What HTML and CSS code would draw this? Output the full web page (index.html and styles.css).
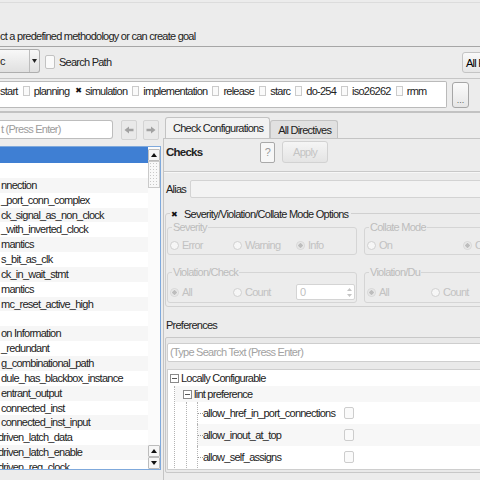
FILE: index.html
```html
<!DOCTYPE html>
<html lang="en">
<head>
<meta charset="UTF-8">
<title>Goal Setup</title>
<link rel="stylesheet" href="styles.css">
</head>
<body>
<div class="intro">ct a predefined methodology or can create goal</div>

<div class="toolbar">
    <div class="combo">
        <span class="combo-text">c</span>
        <span class="combo-arrow"><svg width="5" height="4" viewBox="0 0 5 4"><path d="M0 0H5L2.5 4Z" fill="#222"/></svg></span>
    </div>
    <span class="search-check"></span>
    <span class="label">Search Path</span>
    <button class="all-btn">All Rules</button>
</div>

<div class="methods-row">
    <div class="methods">
        <span>start</span>
        <span class="cb"></span><span>planning</span>
        <span class="cb on">&#10006;</span><span>simulation</span>
        <span class="cb"></span><span>implementation</span>
        <span class="cb"></span><span>release</span>
        <span class="cb"></span><span>starc</span>
        <span class="cb"></span><span>do-254</span>
        <span class="cb"></span><span>iso26262</span>
        <span class="cb"></span><span>rmm</span>
    </div>
    <button class="more">...</button>
</div>

<div class="main">
    <!-- rule list -->
    <div class="left">
        <div class="search-row">
            <div class="search">t (Press Enter)</div>
            <button class="nav"><svg width="10" height="8" viewBox="0 0 10 8"><path d="M0.5 4L5 0.5V2.8H9.5V5.2H5V7.5Z" fill="#a2a2a2"/></svg></button>
            <button class="nav next"><svg width="10" height="8" viewBox="0 0 10 8"><path d="M9.5 4L5 0.5V2.8H0.5V5.2H5V7.5Z" fill="#a2a2a2"/></svg></button>
        </div>
        <div class="list">
            <ul class="rows">
                <li class="sel"></li>
                <li></li>
                <li>nnection</li>
                <li>_port_conn_complex</li>
                <li>ck_signal_as_non_clock</li>
                <li>_with_inverted_clock</li>
                <li>mantics</li>
                <li>s_bit_as_clk</li>
                <li>ck_in_wait_stmt</li>
                <li>mantics</li>
                <li>mc_reset_active_high</li>
                <li></li>
                <li>on Information</li>
                <li>_redundant</li>
                <li>g_combinational_path</li>
                <li>dule_has_blackbox_instance</li>
                <li>entrant_output</li>
                <li>connected_inst</li>
                <li>connected_inst_input</li>
                <li class="cut">driven_latch_data</li>
                <li class="cut">driven_latch_enable</li>
                <li class="cut">driven_reg_clock</li>
            </ul>
            <div class="scrollbar">
                <div class="sb-btn"><svg width="6" height="4" viewBox="0 0 6 4"><path d="M0 4L3 0L6 4Z" fill="#111"/></svg></div>
                <div class="sb-thumb"></div>
                <div class="sb-track"></div>
                <div class="sb-btn"><svg width="6" height="4" viewBox="0 0 6 4"><path d="M0 4L3 0L6 4Z" fill="#111"/></svg></div>
                <div class="sb-btn"><svg width="6" height="4" viewBox="0 0 6 4"><path d="M0 0L3 4L6 0Z" fill="#111"/></svg></div>
            </div>
        </div>
    </div>

    <!-- configuration -->
    <div class="right">
        <div class="tabs">
            <div class="tab active">Check Configurations</div>
            <div class="tab">All Directives</div>
        </div>
        <div class="pane">
            <div class="checks-row">
                <span class="checks-title">Checks</span>
                <button class="help">?</button>
                <button class="apply">Apply</button>
            </div>
            <div class="sep"></div>
            <div class="alias-row">
                <span class="alias-label">Alias</span>
                <div class="alias-input"></div>
            </div>

            <div class="options">
                <div class="legend"><span class="x-mark">&#10006;</span>Severity/Violation/Collate Mode Options</div>
                <div class="groups">
                    <div class="group">
                        <div class="group-title">Severity</div>
                        <div class="radios">
                            <span class="opt"><span class="radio"></span>Error</span>
                            <span class="opt"><span class="radio"></span>Warning</span>
                            <span class="opt"><span class="radio on"></span>Info</span>
                        </div>
                    </div>
                    <div class="group">
                        <div class="group-title">Collate Mode</div>
                        <div class="radios">
                            <span class="opt wide"><span class="radio"></span>On</span>
                            <span class="opt"><span class="radio on"></span>Off</span>
                        </div>
                    </div>
                    <div class="group">
                        <div class="group-title">Violation/Check</div>
                        <div class="radios second">
                            <span class="opt"><span class="radio on"></span>All</span>
                            <span class="opt"><span class="radio"></span>Count</span>
                            <div class="spin">0
                                <span class="spin-arrows">
                                    <svg width="5" height="3" viewBox="0 0 5 3"><path d="M0 3L2.5 0L5 3Z" fill="#c4c4c4"/></svg>
                                    <svg width="5" height="3" viewBox="0 0 5 3"><path d="M0 0L2.5 3L5 0Z" fill="#c4c4c4"/></svg>
                                </span>
                            </div>
                        </div>
                    </div>
                    <div class="group">
                        <div class="group-title">Violation/Du</div>
                        <div class="radios second">
                            <span class="opt du"><span class="radio on"></span>All</span>
                            <span class="opt"><span class="radio"></span>Count</span>
                        </div>
                    </div>
                </div>
            </div>

            <div class="pref-title">Preferences</div>
            <div class="frame">
                <div class="frame-search">(Type Search Text (Press Enter)</div>
                <div class="tree">
                    <div class="node"><svg class="toggle" width="9" height="9" viewBox="0 0 9 9"><rect x="0.5" y="0.5" width="8" height="8" fill="#fff" stroke="#8a8a8a"/><path d="M2 4.5H7" stroke="#555"/></svg>Locally Configurable</div>
                    <div class="children">
                        <div class="node sub"><svg class="toggle" width="9" height="9" viewBox="0 0 9 9"><rect x="0.5" y="0.5" width="8" height="8" fill="#fff" stroke="#8a8a8a"/><path d="M2 4.5H7" stroke="#555"/></svg>lint preference</div>
                        <div class="children inner">
                            <div class="leaf"><span class="dash"></span><span class="leaf-name">allow_href_in_port_connections</span><span class="leaf-cb"></span></div>
                            <div class="leaf alt"><span class="dash"></span><span class="leaf-name">allow_inout_at_top</span><span class="leaf-cb"></span></div>
                            <div class="leaf"><span class="dash"></span><span class="leaf-name">allow_self_assigns</span><span class="leaf-cb"></span></div>
                        </div>
                    </div>
                </div>
            </div>
        </div>
    </div>
</div>
</body>
</html>
```

FILE: styles.css
```css
* {
    box-sizing: border-box;
}
body {
    margin: 0;
    width: 480px;
    height: 480px;
    overflow: hidden;
    background: #ececec;
    color: #222;
    font-family: "Liberation Sans Narrow", "Liberation Sans", Arial, sans-serif;
    font-size: 11px;
    letter-spacing: -0.75px;
}
button {
    font: inherit;
    letter-spacing: inherit;
    padding: 0;
    cursor: pointer;
}

/* top bars */
.intro {
    margin-top: 2px;
    height: 45px;
    padding-top: 26px;
    line-height: 14px;
    border-top: 1px solid #dcdcdc;
    border-bottom: 1px solid #a6a6a6;
    white-space: nowrap;
}
.toolbar {
    display: flex;
    align-items: flex-start;
    height: 32px;
    padding-top: 2px;
    border-bottom: 1px solid #c6c6c6;
}
.combo {
    display: flex;
    width: 40px;
    height: 24px;
    border: 1px solid #aeaeae;
    border-left: none;
    border-radius: 0 3px 3px 0;
    background: linear-gradient(#f8f8f8, #e0e0e0);
}
.combo-text {
    width: 29px;
    line-height: 22px;
}
.combo-arrow {
    flex: 1;
    display: flex;
    align-items: center;
    justify-content: center;
    border-left: 1px solid #bdbdbd;
}
.search-check {
    width: 10px;
    height: 14px;
    margin: 6px 0 0 5px;
    border: 1px solid #c2c2c2;
    border-radius: 2px;
    background: #fafafa;
}
.toolbar .label {
    margin-left: 4px;
    line-height: 26px;
}
.all-btn {
    margin: 3px -12px 0 auto;
    width: 30px;
    height: 21px;
    padding-left: 3px;
    text-align: left;
    border: 1px solid #c4c4c4;
    border-radius: 3px;
    background: linear-gradient(#f9f9f9, #e6e6e6);
    white-space: nowrap;
    overflow: hidden;
}

.methods-row {
    display: flex;
    height: 34px;
    padding-top: 2px;
    border-bottom: 2px solid #c2c2c2;
}
.methods {
    display: flex;
    align-items: flex-start;
    width: 447px;
    height: 27px;
    padding-top: 3px;
    line-height: 12px;
    background: #fff;
    border: 1px solid #bababa;
    border-left: none;
    border-radius: 0 2px 2px 0;
    white-space: nowrap;
}
.cb {
    flex-shrink: 0;
    width: 7px;
    height: 10px;
    margin: 1px 4px 0 5px;
    border: 1px solid #cbcbcb;
    background: #fafafa;
    font-family: "DejaVu Sans", sans-serif;
    font-size: 8px;
    letter-spacing: 0;
    line-height: 8px;
    text-align: center;
}
.cb.on {
    border-color: transparent;
    background: transparent;
    color: #111;
}
.more {
    width: 17px;
    height: 26px;
    margin: 1px 0 0 5px;
    padding-top: 9px;
    border: 1px solid #a6a6a6;
    border-radius: 3px;
    background: linear-gradient(#fbfbfb, #e6e6e6);
    color: #666;
    font-size: 9px;
    letter-spacing: 0;
}

/* main area */
.main {
    display: flex;
    height: 367px;
}
.left {
    width: 161px;
    padding-top: 7px;
}
.search-row {
    display: flex;
    height: 20px;
}
.search {
    width: 113px;
    height: 19px;
    padding-left: 1px;
    line-height: 17px;
    color: #9c9c9c;
    background: #fff;
    border: 1px solid #bdbdbd;
    border-left: none;
    border-radius: 0 3px 3px 0;
    white-space: nowrap;
}
.nav {
    display: flex;
    align-items: center;
    justify-content: center;
    width: 16px;
    height: 20px;
    margin-left: 8px;
    border: 1px solid #d3d3d3;
    border-radius: 2px;
    background: #e9e9e9;
}
.nav.next {
    margin-left: 6px;
}
.list {
    display: flex;
    height: 324px;
    margin-top: 6px;
    overflow: hidden;
    background: #fff;
    border: 1px solid #7fa9dc;
    border-left: none;
}
.rows {
    list-style: none;
    margin: 0;
    padding: 0;
    width: 148px;
}
.rows li {
    height: 14.85px;
    line-height: 14.85px;
    padding-left: 1px;
    white-space: nowrap;
    overflow: hidden;
}
.rows li:nth-child(odd) {
    background: #f6f6f6;
}
.rows li.sel {
    height: 16px;
    background: #3f7fd3;
}
.rows li.cut {
    text-indent: -3px;
}
.scrollbar {
    display: flex;
    flex-direction: column;
    width: 12px;
    padding-top: 2px;
    background: #fbfbfb;
}
.sb-btn {
    display: flex;
    align-items: center;
    justify-content: center;
    height: 12px;
    border: 1px solid #bcbcbc;
    border-radius: 1px;
    background: #f6f6f6;
}
.sb-thumb {
    height: 27px;
    border: 1px solid #cacaca;
    background-color: #f8f8f8;
    background-image: radial-gradient(#c8c8c8 0.8px, transparent 1px);
    background-size: 3px 3px;
}
.sb-track {
    flex: 1;
}

.right {
    width: 330px;
    margin-left: 2px;
    padding-top: 4px;
}
.tabs {
    display: flex;
    align-items: flex-end;
    height: 21px;
    padding-left: 2px;
}
.tab {
    height: 18px;
    padding: 0 6px 0 7px;
    line-height: 19px;
    border: 1px solid #c3c3c3;
    border-bottom: none;
    border-radius: 3px 3px 0 0;
    background: #e1e1e1;
    white-space: nowrap;
}
.tab.active {
    height: 21px;
    line-height: 20px;
    background: #f2f2f2;
}
.pane {
    height: 342px;
    padding-left: 2px;
    border-top: 1px solid #c4c4c4;
    border-left: 1px solid #c4c4c4;
}
.checks-row {
    display: flex;
    align-items: center;
    height: 26px;
}
.checks-title {
    width: 94px;
    font-size: 11.5px;
    font-weight: bold;
}
.help {
    width: 15px;
    height: 21px;
    border: 1px solid #a9a9a9;
    border-radius: 2px;
    background: #f7f7f7;
    color: #999;
}
.apply {
    width: 46px;
    height: 22px;
    margin-left: 7px;
    border: 1px solid #d2d2d2;
    border-radius: 3px;
    background: linear-gradient(#f5f5f5, #e4e4e4);
    color: #c4c4c4;
}
.sep {
    margin: 6px 0 0 -2px;
    border-top: 1px solid #c9c9c9;
    border-bottom: 1px solid #f7f7f7;
}
.alias-row {
    display: flex;
    align-items: center;
    height: 19px;
    margin-top: 6px;
}
.alias-label {
    width: 24px;
}
.alias-input {
    flex: 1;
    height: 18px;
    border: 1px solid #d3d3d3;
    border-radius: 2px;
    background: #f3f3f3;
}

.options {
    margin: 15px 0 0 -1px;
    padding: 0 0 3px 1px;
    border: 1px solid #d0d0d0;
    border-radius: 3px;
}
.legend {
    display: flex;
    align-items: center;
    width: max-content;
    height: 14px;
    margin: -7px 0 0 3px;
    padding: 0 3px 0 1px;
    background: #ececec;
}
.x-mark {
    width: 13px;
    font-family: "DejaVu Sans", sans-serif;
    font-size: 8px;
    letter-spacing: 0;
    color: #111;
}
.groups {
    display: grid;
    grid-template-columns: 190px 140px;
    column-gap: 7px;
    row-gap: 17px;
    margin-top: 6px;
}
.group {
    height: 28px;
    border: 1px solid #d5d5d5;
    border-radius: 3px;
}
.group:nth-child(n+3) {
    height: 31px;
}
.group-title {
    width: max-content;
    height: 13px;
    margin: -7px 0 0 4px;
    padding: 0 1px;
    line-height: 13px;
    color: #bdbdbd;
    background: #ececec;
}
.radios {
    display: flex;
    align-items: center;
    height: 16px;
    margin-top: 3px;
    padding-left: 2px;
    color: #c2c2c2;
}
.radios.second {
    margin-top: 5px;
}
.opt {
    display: flex;
    flex-shrink: 0;
    align-items: center;
    width: 63px;
    white-space: nowrap;
}
.opt.wide {
    width: 96px;
}
.opt.du {
    width: 64px;
}
.radio {
    width: 9px;
    height: 9px;
    margin-right: 3px;
    border: 1px solid #d0d0d0;
    border-radius: 50%;
    background: #f6f6f6;
}
.radio.on {
    border-color: #d6d6d6;
    background: radial-gradient(#bdbdbd 40%, #dcdcdc 45%, #f0f0f0 70%);
}
.spin {
    display: flex;
    flex-shrink: 0;
    align-items: center;
    justify-content: space-between;
    width: 59px;
    height: 16px;
    padding: 0 2px 0 3px;
    border: 1px solid #d4d4d4;
    border-radius: 2px;
    background: #fff;
    color: #bfbfbf;
}
.spin-arrows {
    display: flex;
    flex-direction: column;
    gap: 3px;
}
.spin-arrows svg {
    display: block;
}

.pref-title {
    margin-top: 12px;
    line-height: 13px;
}
.frame {
    height: 136px;
    margin: 5px 0 0 -1px;
    padding: 5px 1px 0 1px;
    border: 1px solid #c8c8c8;
    border-radius: 2px;
    background: #e9e9e9;
}
.frame-search {
    height: 19px;
    padding-left: 2px;
    line-height: 17px;
    color: #a2a2a2;
    background: #fff;
    border: 1px solid #cecece;
    border-radius: 2px;
    white-space: nowrap;
}
.tree {
    height: 101px;
    margin-top: 7px;
    background: #fff;
    border: 1px solid #cecece;
}
.node {
    display: flex;
    align-items: center;
    height: 16px;
    padding-left: 2px;
    white-space: nowrap;
}
.node.sub {
    padding-left: 8px;
    background: #f7f7f7;
}
.toggle {
    margin-right: 2px;
}
.children {
    margin-left: 6px;
    border-left: 1px dotted #b4b4b4;
}
.children.inner {
    margin-left: 11px;
}
.leaf {
    display: flex;
    align-items: center;
    height: 22px;
    margin-left: 10px;
    border-left: 1px dotted #b4b4b4;
    white-space: nowrap;
}
.leaf.alt {
    background: #f7f7f7;
}
.dash {
    width: 5px;
    border-top: 1px dotted #9a9a9a;
}
.leaf-name {
    flex-shrink: 0;
    width: 141px;
}
.leaf-cb {
    flex-shrink: 0;
    width: 10px;
    height: 12px;
    border: 1px solid #cdcdcd;
    border-radius: 2px;
    background: #fafafa;
}
```
